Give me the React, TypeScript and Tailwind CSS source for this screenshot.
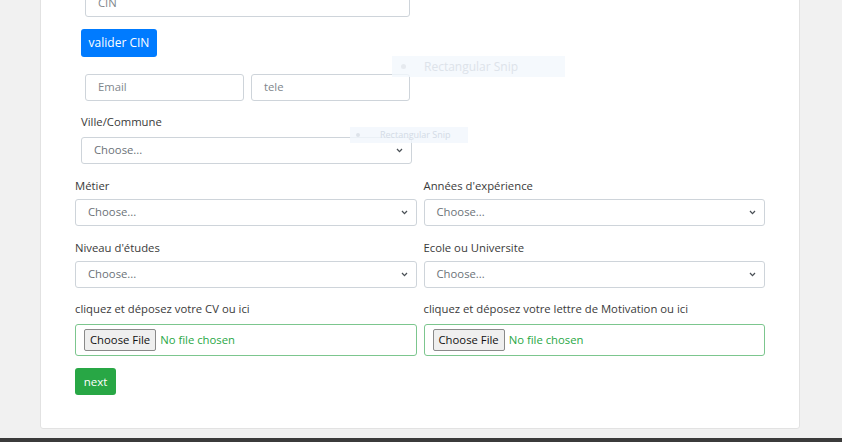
import React from 'react';

function Chevron() {
  return (
    <svg width="7" height="5" viewBox="0 0 7 5" className="shrink-0">
      <path d="M1 1 L3.5 3.6 L6 1" fill="none" stroke="#4a5056" strokeWidth="1.3" />
    </svg>
  );
}

function Select({ className = '' }: { className?: string }) {
  return (
    <div
      className={`h-[27px] border border-[#ced4da] rounded-[3px] bg-white flex items-center justify-between pl-[12px] pr-[8px] text-[11.3px] text-[#6c7278] ${className}`}
    >
      <span>Choose...</span>
      <Chevron />
    </div>
  );
}

function Input({ placeholder, className = '' }: { placeholder: string; className?: string }) {
  return (
    <div
      className={`h-[27px] border border-[#ced4da] rounded-[3px] bg-white flex items-center pl-[12px] text-[11.3px] text-[#80868c] ${className}`}
    >
      {placeholder}
    </div>
  );
}

function FileBox() {
  return (
    <div className="h-[32px] border border-[#7cc68e] rounded-[3px] bg-white flex items-center pl-[8px] text-[11.3px]">
      <span className="h-[22px] px-[5px] flex items-center bg-[#efefef] border border-[#8a8a8a] rounded-[2px] text-[#111]">
        Choose File
      </span>
      <span className="ml-[4px] text-[#28a745]">No file chosen</span>
    </div>
  );
}

const rows = [
  { left: 'Métier', right: "Années d'expérience" },
  { left: "Niveau d'études", right: 'Ecole ou Universite' },
];

export default function App() {
  return (
    <div className="w-[846px] h-[442px] flex flex-col bg-white overflow-hidden font-['Open_Sans',sans-serif] text-[11.3px] text-[#3a3a3a]">
      <div className="flex-1 min-h-0 mr-1 bg-[#f1f1f1] overflow-hidden pl-[40px] pr-[42px] relative">
        <div className="-mt-[31px] bg-white border border-[#e2e2e2] rounded-[3px] pt-[20px] pl-[34px] pr-[34px] pb-[33px]">
          {/* CIN block */}
          <Input placeholder="CIN" className="ml-[10px] w-[325px]" />
          <button className="mt-[12px] ml-[6px] w-[76px] h-[28px] rounded-[3px] bg-[#007bff] text-white text-[12px] flex items-center justify-center">
            valider CIN
          </button>
          <div className="mt-[17px] ml-[10px] flex gap-[7px]">
            <Input placeholder="Email" className="w-[159px]" />
            <Input placeholder="tele" className="w-[159px]" />
          </div>
          <div className="mt-[13px] ml-[6px] leading-[16px]">Ville/Commune</div>
          <Select className="mt-[7px] ml-[6px] w-[331px]" />

          {rows.map((r) => (
            <div key={r.left} className="mt-[14px] grid grid-cols-2 gap-[7px]">
              <div>
                <div className="leading-[16px] mb-[5px]">{r.left}</div>
                <Select />
              </div>
              <div>
                <div className="leading-[16px] mb-[5px]">{r.right}</div>
                <Select />
              </div>
            </div>
          ))}

          <div className="mt-[13px] grid grid-cols-2 gap-[7px]">
            <div>
              <div className="leading-[16px] mb-[7px]">cliquez et déposez votre CV ou ici</div>
              <FileBox />
            </div>
            <div>
              <div className="leading-[16px] mb-[7px]">cliquez et déposez votre lettre de Motivation ou ici</div>
              <FileBox />
            </div>
          </div>

          <button className="mt-[12px] w-[41px] h-[27px] rounded-[3px] bg-[#28a745] text-white text-[11.5px] flex items-center justify-center">
            next
          </button>
        </div>

        {/* faint snipping tool overlays */}
        <div className="absolute left-[392px] top-[56px] w-[173px] h-[21px] bg-[#f3f7fd]/80 flex items-center">
          <span className="ml-[9px] w-[5px] h-[5px] rounded-full bg-[#e6eaef]" />
          <span className="ml-[18px] text-[12px] text-[#dde3ea]">Rectangular Snip</span>
        </div>
        <div className="absolute left-[350px] top-[127px] w-[118px] h-[16px] bg-[#f1f6fd]/80 flex items-center">
          <span className="ml-[6px] w-[4px] h-[4px] rounded-full bg-[#dde3ea]" />
          <span className="ml-[20px] text-[9px] text-[#d3dbe6]">Rectangular Snip</span>
        </div>
      </div>
      <div className="h-1 mr-1 bg-[#3b3b3b]" />
    </div>
  );
}
